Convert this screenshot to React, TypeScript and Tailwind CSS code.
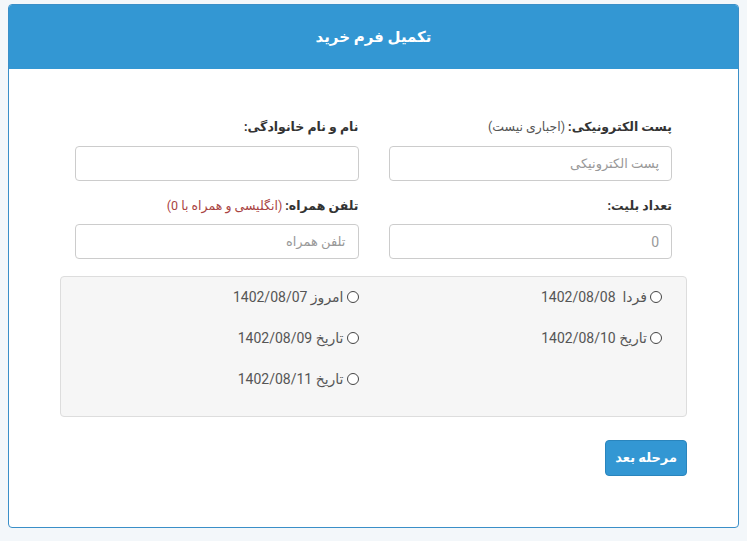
const dates = {
  right: ['فردا  1402/08/08', 'تاریخ 1402/08/10'],
  left: ['امروز 1402/08/07', 'تاریخ 1402/08/09', 'تاریخ 1402/08/11'],
};

const Radio = ({ label }: { label: string }) => (
  <label className="flex items-center gap-[3px] h-[20px] mb-[21px] text-[14px] text-[#555] whitespace-pre">
    <span className="w-[12px] h-[12px] rounded-full border border-[#444] bg-white shrink-0" />
    <span>{label}</span>
  </label>
);

const App = () => {
  return (
    <div
      dir="rtl"
      className="min-h-[541px] bg-[#f3f7fa] pt-[4px] px-[8px] pb-[13px]"
      style={{ fontFamily: 'Roboto, "DejaVu Sans", sans-serif' }}
    >
      <div className="bg-white border border-[#3a8fc8] rounded-[4px] overflow-hidden">
        {/* Header */}
        <div className="h-[64px] bg-[#3397d3] flex items-center justify-center">
          <h1 className="text-white font-bold text-[15px]">تکمیل فرم خرید</h1>
        </div>

        {/* Body */}
        <div className="px-[51px] pt-[49px] pb-[51px]">
          <div className="grid grid-cols-2">
            <div className="px-[15px]">
              <div className="text-[12.5px] font-bold text-[#333] h-[20px] mb-[8px]">
                پست الکترونیکی: <span className="font-normal text-[#555]">(اجباری نیست)</span>
              </div>
              <input
                placeholder="پست الکترونیکی"
                className="w-full h-[35px] border border-[#ccc] rounded-[4px] px-[12px] text-[13px] placeholder:text-[#999] outline-none"
              />
            </div>
            <div className="px-[15px]">
              <div className="text-[12.5px] font-bold text-[#333] h-[20px] mb-[8px]">نام و نام خانوادگی:</div>
              <input className="w-full h-[35px] border border-[#ccc] rounded-[4px] px-[12px] text-[13px] outline-none" />
            </div>
            <div className="px-[15px] mt-[16px]">
              <div className="text-[12.5px] font-bold text-[#333] h-[20px] mb-[7px]">تعداد بلیت:</div>
              <input
                placeholder="0"
                className="w-full h-[35px] border border-[#ccc] rounded-[4px] px-[12px] text-[14px] placeholder:text-[#999] outline-none"
              />
            </div>
            <div className="px-[15px] mt-[16px]">
              <div className="text-[12.5px] font-bold text-[#333] h-[20px] mb-[7px]">
                تلفن همراه: <span className="font-normal text-[#a94442]">(انگلیسی و همراه با 0)</span>
              </div>
              <input
                placeholder="تلفن همراه"
                className="w-full h-[35px] border border-[#ccc] rounded-[4px] px-[12px] text-[13px] placeholder:text-[#999] outline-none"
              />
            </div>
          </div>

          {/* Dates */}
          <div className="mt-[17px] bg-[#f6f6f6] border border-[#ddd] rounded-[4px] px-[9px] pt-[10px] pb-[6px] grid grid-cols-2">
            <div className="px-[15px]">
              {dates.right.map((d) => (
                <Radio key={d} label={d} />
              ))}
            </div>
            <div className="px-[15px]">
              {dates.left.map((d) => (
                <Radio key={d} label={d} />
              ))}
            </div>
          </div>

          <div className="mt-[23px] flex">
            <button className="h-[36px] px-[9px] bg-[#3397d3] border border-[#2a85bd] rounded-[4px] text-white font-bold text-[13px]">
              مرحله بعد
            </button>
          </div>
        </div>
      </div>
    </div>
  );
};

export default App;
